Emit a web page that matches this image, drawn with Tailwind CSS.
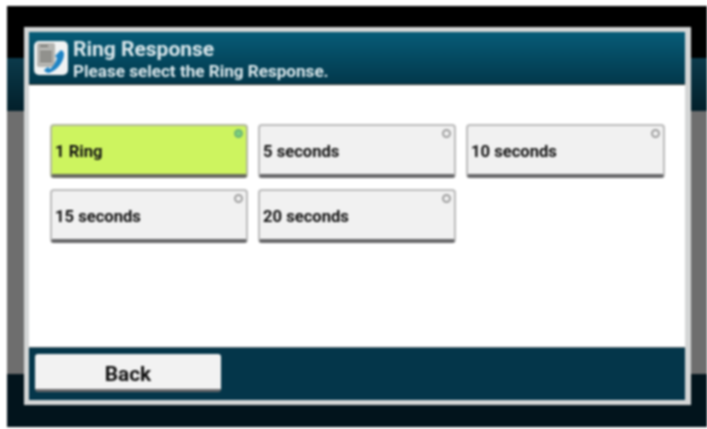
<!DOCTYPE html>
<html lang="en">
<head>
    <meta charset="UTF-8">
    <title>Ring Response</title>
    <script src="https://cdn.jsdelivr.net/npm/@tailwindcss/browser@4"></script>
</head>
<body class="bg-white w-[707px] h-[429px] overflow-hidden font-['Roboto',sans-serif]">
    <div class="relative ml-[7px] mt-[6px] w-[700px] h-[421px] flex flex-col blur-[0.8px]">
        <!-- Screen behind the dialog -->
        <div class="h-[52px] bg-black"></div>
        <div class="h-[53px] bg-gradient-to-b from-[#0c3a4b] to-[#03202b]"></div>
        <div class="h-[263px] bg-[#6e6e6e]"></div>
        <div class="h-[53px] bg-[#02141c]"></div>

        <!-- Dialog -->
        <div class="absolute left-[17px] top-[21px] w-[667px] h-[378px] border-[5px] border-r-[6px] border-[#d4d6d6] flex flex-col">
            <div class="h-[53px] shrink-0 bg-gradient-to-b from-[#075c78] to-[#03384b] border-b border-[#3a3a32] flex items-center pl-[5px] gap-[5px]">
                <div class="w-[34px] h-[34px] rounded-[5px] bg-[#f1f3f3] flex items-center justify-center">
                    <svg width="34" height="34" viewBox="0 0 34 34">
                        <rect x="3" y="2" width="18" height="24" rx="2" fill="#b4b4b0"/>
                        <path d="M6 5h8M6 11h12M6 14h12M6 17h12M6 20h12" stroke="#6d6d6a" stroke-width="1.4"/>
                        <path d="M27 9c2 1 3 2 3 4c0 7-6 16-15 19c-2 0-4-1-5-3l4-3l2 2c3-2 6-7 7-11l-2-2z" fill="#1d83c4"/>
                    </svg>
                </div>
                <div class="font-bold text-[#dbe8ec] mt-[3px]">
                    <div class="text-[21px] leading-[22px]">Ring Response</div>
                    <div class="text-[17.1px] leading-[22px]">Please select the Ring Response.</div>
                </div>
            </div>

            <div class="flex-1 bg-white pt-[39px] pl-[21px]">
                <div class="grid grid-cols-[198px_198px_199px] gap-x-[10px] gap-y-[11px]">
                    <button class="relative h-[54px] rounded-[4px] bg-[#cdf45f] border-[2px] border-b-[4px] border-[#b3b8a0] border-b-[#686a60] text-left pl-[3px] pt-[5px] text-[16.6px] font-bold text-[#111]">
                        1 Ring
                        <span class="absolute right-[3px] top-[3px] w-[9px] h-[9px] rounded-full bg-[#7bd17b] border-2 border-[#6fb578]"></span>
                    </button>
                    <button class="relative h-[54px] rounded-[4px] bg-[#f1f1f1] border-[2px] border-b-[4px] border-[#bcbcbc] border-b-[#68686a] text-left pl-[3px] pt-[5px] text-[16.6px] font-bold text-[#111]">
                        5 seconds
                        <span class="absolute right-[3px] top-[3px] w-[9px] h-[9px] rounded-full bg-[#f1f1f1] border-2 border-[#a0a0a0]"></span>
                    </button>
                    <button class="relative h-[54px] rounded-[4px] bg-[#f1f1f1] border-[2px] border-b-[4px] border-[#bcbcbc] border-b-[#68686a] text-left pl-[3px] pt-[5px] text-[16.6px] font-bold text-[#111]">
                        10 seconds
                        <span class="absolute right-[3px] top-[3px] w-[9px] h-[9px] rounded-full bg-[#f1f1f1] border-2 border-[#a0a0a0]"></span>
                    </button>
                    <button class="relative h-[54px] rounded-[4px] bg-[#f1f1f1] border-[2px] border-b-[4px] border-[#bcbcbc] border-b-[#68686a] text-left pl-[3px] pt-[5px] text-[16.6px] font-bold text-[#111]">
                        15 seconds
                        <span class="absolute right-[3px] top-[3px] w-[9px] h-[9px] rounded-full bg-[#f1f1f1] border-2 border-[#a0a0a0]"></span>
                    </button>
                    <button class="relative h-[54px] rounded-[4px] bg-[#f1f1f1] border-[2px] border-b-[4px] border-[#bcbcbc] border-b-[#68686a] text-left pl-[3px] pt-[5px] text-[16.6px] font-bold text-[#111]">
                        20 seconds
                        <span class="absolute right-[3px] top-[3px] w-[9px] h-[9px] rounded-full bg-[#f1f1f1] border-2 border-[#a0a0a0]"></span>
                    </button>
                </div>
            </div>

            <div class="h-[53px] shrink-0 bg-[#04364a] border-t border-[#55666c] flex items-center pl-[6px] pb-[2px]">
                <button class="w-[186px] h-[38px] pt-[5px] rounded-[3px] bg-[#f2f2f2] border-b-[3px] border-[#68686a] text-[20.8px] font-bold text-[#111]">Back</button>
            </div>
        </div>
    </div>
</body>
</html>
